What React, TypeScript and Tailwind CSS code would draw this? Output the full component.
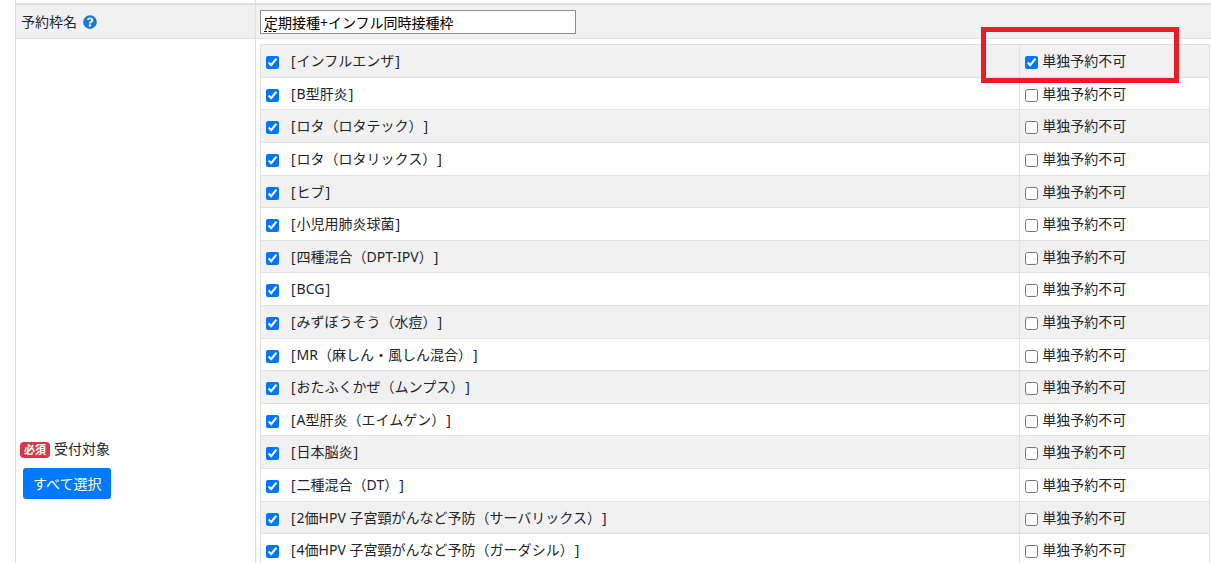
import React, { useState } from 'react';
import { FaQuestionCircle } from 'react-icons/fa';

interface Vaccine {
  id: string;
  name: string;
  selected: boolean;
  noSingle: boolean;
}

const names = [
  'インフルエンザ',
  'B型肝炎',
  'ロタ（ロタテック）',
  'ロタ（ロタリックス）',
  'ヒブ',
  '小児用肺炎球菌',
  '四種混合（DPT-IPV）',
  'BCG',
  'みずぼうそう（水痘）',
  'MR（麻しん・風しん混合）',
  'おたふくかぜ（ムンプス）',
  'A型肝炎（エイムゲン）',
  '日本脳炎',
  '二種混合（DT）',
  '2価HPV 子宮頸がんなど予防（サーバリックス）',
  '4価HPV 子宮頸がんなど予防（ガーダシル）',
];

const initialVaccines: Vaccine[] = names.map((name, i) => ({
  id: `vaccine-${i}`,
  name,
  selected: true,
  noSingle: i === 0,
}));

interface VaccineRowProps {
  vaccine: Vaccine;
  highlighted: boolean;
  onChange: (patch: Partial<Vaccine>) => void;
}

function VaccineRow({ vaccine, highlighted, onChange }: VaccineRowProps) {
  return (
    <tr className="h-[33px] odd:bg-[#f1f1f1] nth-[5n]:h-8 nth-[5n+2]:h-8">
      <td className="w-4/5 border border-[#dee2e6] px-[5px]">
        <div className="flex items-center">
          <input
            id={vaccine.id}
            type="checkbox"
            checked={vaccine.selected}
            onChange={e => onChange({ selected: e.target.checked })}
            className="mt-[3px] size-[13px] shrink-0"
          />
          <label htmlFor={vaccine.id} className="pl-[11px]">
            <span className="px-px">[</span>
            {vaccine.name}
            <span className="px-px">]</span>
          </label>
        </div>
      </td>
      <td className="relative border border-[#dee2e6] px-[5px]">
        <div className="flex items-center">
          <input
            id={`${vaccine.id}-single`}
            type="checkbox"
            checked={vaccine.noSingle}
            onChange={e => onChange({ noSingle: e.target.checked })}
            className="mt-[3px] size-[13px] shrink-0"
          />
          <label htmlFor={`${vaccine.id}-single`} className="pl-1">単独予約不可</label>
        </div>
        {highlighted && (
          <div className="pointer-events-none absolute -top-[18px] right-[30px] -bottom-[6px] -left-[39px] z-10 border-[5px] border-[#ed1c24]" />
        )}
      </td>
    </tr>
  );
}

export default function App() {
  const [slotName, setSlotName] = useState('定期接種+インフル同時接種枠');
  const [vaccines, setVaccines] = useState(initialVaccines);

  const update = (id: string, patch: Partial<Vaccine>) => {
    setVaccines(vaccines.map(v => (v.id === id ? { ...v, ...patch } : v)));
  };

  return (
    <div className="h-screen overflow-hidden bg-white pl-[15px] font-['Noto_Sans','Noto_Sans_CJK_JP',sans-serif] text-sm leading-[22px] text-[#212529] [text-spacing-trim:space-all]">
      <div className="flex min-h-full flex-col border-l border-[#dee2e6]">
        {/* Bottom edge of the previous section */}
        <div className="flex h-[3px]">
          <div className="w-60 shrink-0 border-r border-[#dee2e6]" />
        </div>

        {/* Slot name */}
        <div className="flex border-t-2 border-b border-[#dee2e6] bg-[#f1f1f1]">
          <div className="flex w-60 shrink-0 items-center gap-1.5 border-r border-[#dee2e6] px-[5px]">
            <label htmlFor="slot-name">予約枠名</label>
            <button type="button" aria-label="ヘルプ" className="text-[#1976d2]">
              <FaQuestionCircle size={14} />
            </button>
          </div>
          <div className="flex-1 px-1 pt-[5px] pb-1">
            <div className="relative w-[316px]">
              <input
                id="slot-name"
                type="text"
                value={slotName}
                onChange={e => setSlotName(e.target.value)}
                className="block h-6 w-full border border-[#8f8f8f] bg-white px-[3px] text-black"
              />
              <span className="absolute bottom-[2px] left-1 w-3 border-b border-dashed border-black" />
            </div>
          </div>
        </div>

        {/* Target vaccines */}
        <div className="flex flex-1">
          <div className="w-60 shrink-0 border-r border-[#dee2e6] px-1 pt-[399px]">
            <div className="flex items-center gap-1">
              <span className="mt-px rounded bg-[#dc3545] px-1 text-[11px] leading-4 font-bold text-white">必須</span>
              <span>受付対象</span>
            </div>
            <button
              type="button"
              onClick={() => setVaccines(vaccines.map(v => ({ ...v, selected: true })))}
              className="mt-2 ml-[3px] h-[31px] rounded-[3px] bg-[#007bff] px-2.5 text-white"
            >
              すべて選択
            </button>
          </div>
          <div className="flex-1 pt-[5px] pr-px pl-1">
            <table className="w-full border-collapse">
              <tbody>
                {vaccines.map((v, i) => (
                  <VaccineRow
                    key={v.id}
                    vaccine={v}
                    highlighted={i === 0}
                    onChange={patch => update(v.id, patch)}
                  />
                ))}
              </tbody>
            </table>
          </div>
        </div>
      </div>
    </div>
  );
}
